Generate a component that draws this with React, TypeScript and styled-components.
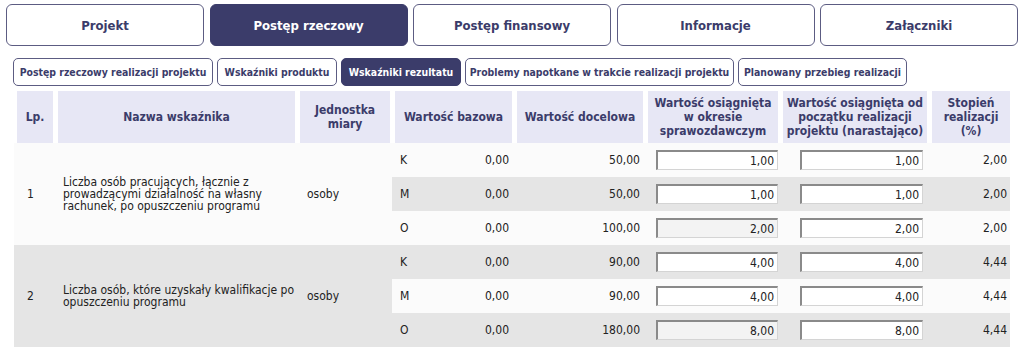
import React, { FC } from 'react';
import styled, { createGlobalStyle } from 'styled-components';

const GlobalStyle = createGlobalStyle`
  html, body {
    margin: 0;
    padding: 0;
    background: #ffffff;
  }

  body {
    font-family: Tahoma, "DejaVu Sans Condensed", "DejaVu Sans", sans-serif;
    color: #222222;
  }
`;

const NAVY = '#3b3c6a';

const Page = styled.div`
  box-sizing: border-box;
  width: 1023px;
  height: 354px;
  padding-top: 4px;
  overflow: hidden;
`;

const MainTabs = styled.nav`
  display: grid;
  grid-template-columns: repeat(5, 198px);
  column-gap: 5.5px;
  padding-left: 6px;
`;

const MainTab = styled.div<{ $active?: boolean }>`
  box-sizing: border-box;
  height: 42px;
  display: flex;
  align-items: center;
  justify-content: center;
  border: 1.5px solid ${({ $active }) => ($active ? NAVY : '#5c5c82')};
  border-radius: 6px;
  background: ${({ $active }) => ($active ? NAVY : '#ffffff')};
  color: ${({ $active }) => ($active ? '#ffffff' : NAVY)};
  font-size: 13px;
  font-weight: bold;
`;

const SubTabs = styled.nav`
  display: flex;
  gap: 4px;
  margin-top: 12px;
  padding-left: 13px;
`;

const SubTab = styled.div<{ $active?: boolean }>`
  box-sizing: border-box;
  height: 28px;
  display: flex;
  align-items: center;
  justify-content: center;
  border: 1.5px solid ${({ $active }) => ($active ? NAVY : '#5c5c82')};
  border-radius: 5px;
  background: ${({ $active }) => ($active ? NAVY : '#ffffff')};
  color: ${({ $active }) => ($active ? '#ffffff' : NAVY)};
  font-size: 10.4px;
  font-weight: bold;
  white-space: nowrap;
`;

const Table = styled.div`
  margin-top: 5px;
  margin-left: 14px;
  width: 996px;
`;

const HeaderRow = styled.div`
  display: grid;
  grid-template-columns: 36px 237px 90px 117px 126px 130px 144px 78px;
  column-gap: 5px;
  padding-left: 3px;
`;

const HeaderCell = styled.div`
  height: 52px;
  display: flex;
  align-items: center;
  justify-content: center;
  background: #e7e7f5;
  color: ${NAVY};
  font-size: 12px;
  font-weight: bold;
  line-height: 14px;
  text-align: center;
`;

const Group = styled.div<{ $shaded?: boolean }>`
  display: flex;
  background: ${({ $shaded }) => ($shaded ? '#e5e5e5' : '#fbfbfb')};
`;

const GroupInfo = styled.div`
  box-sizing: border-box;
  width: 378px;
  display: grid;
  grid-template-columns: 36px 237px 90px;
  column-gap: 5px;
  align-items: center;
  padding-left: 3px;
  font-size: 12px;
  line-height: 12px;
`;

const InfoCell = styled.div<{ $pad?: number }>`
  padding-left: ${({ $pad }) => $pad ?? 7}px;
`;

const Lines = styled.div`
  display: flex;
  flex-direction: column;
`;

const ValueRow = styled.div<{ $shaded?: boolean }>`
  box-sizing: border-box;
  height: 34px;
  display: grid;
  grid-template-columns: 117px 126px 130px 144px 78px;
  column-gap: 5px;
  align-items: center;
  padding-left: 3px;
  background: ${({ $shaded }) => ($shaded ? '#e5e5e5' : '#fbfbfb')};
  font-size: 12px;
`;

const BaseCell = styled.div`
  display: flex;
  justify-content: space-between;
  padding: 0 3px 0 5px;
`;

const NumCell = styled.div`
  text-align: right;
  padding-right: 3px;
`;

const InputCell = styled.div<{ $pad: number }>`
  display: flex;
  padding-left: ${({ $pad }) => $pad}px;
`;

const NumberInput = styled.div<{ $readonly?: boolean }>`
  box-sizing: border-box;
  width: 123px;
  height: 20px;
  display: flex;
  align-items: center;
  justify-content: flex-end;
  padding-right: 3px;
  border-style: solid;
  border-width: 2px 1px 1px 2px;
  border-color: #8a8a8a #d4d4d4 #d4d4d4 #8a8a8a;
  background: ${({ $readonly }) => ($readonly ? '#f3f3f3' : '#ffffff')};
  font-size: 12px;
`;

interface ValueLine {
  code: string;
  base: string;
  target: string;
  period: string;
  total: string;
  percent: string;
  readonly?: boolean;
}

interface Indicator {
  lp: string;
  name: string[];
  unit: string;
  lines: ValueLine[];
}

const mainTabs = ['Projekt', 'Postęp rzeczowy', 'Postęp finansowy', 'Informacje', 'Załączniki'];

const subTabs = [
  { label: 'Postęp rzeczowy realizacji projektu', width: 200 },
  { label: 'Wskaźniki produktu', width: 120 },
  { label: 'Wskaźniki rezultatu', width: 120 },
  { label: 'Problemy napotkane w trakcie realizacji projektu', width: 269 },
  { label: 'Planowany przebieg realizacji', width: 169 },
];

const headers = [
  ['Lp.'],
  ['Nazwa wskaźnika'],
  ['Jednostka', 'miary'],
  ['Wartość bazowa'],
  ['Wartość docelowa'],
  ['Wartość osiągnięta', 'w okresie', 'sprawozdawczym'],
  ['Wartość osiągnięta od', 'początku realizacji', 'projektu (narastająco)'],
  ['Stopień', 'realizacji', '(%)'],
];

const indicators: Indicator[] = [
  {
    lp: '1',
    name: ['Liczba osób pracujących, łącznie z', 'prowadzącymi działalność na własny', 'rachunek, po opuszczeniu programu'],
    unit: 'osoby',
    lines: [
      { code: 'K', base: '0,00', target: '50,00', period: '1,00', total: '1,00', percent: '2,00' },
      { code: 'M', base: '0,00', target: '50,00', period: '1,00', total: '1,00', percent: '2,00' },
      { code: 'O', base: '0,00', target: '100,00', period: '2,00', total: '2,00', percent: '2,00', readonly: true },
    ],
  },
  {
    lp: '2',
    name: ['Liczba osób, które uzyskały kwalifikacje po', 'opuszczeniu programu'],
    unit: 'osoby',
    lines: [
      { code: 'K', base: '0,00', target: '90,00', period: '4,00', total: '4,00', percent: '4,44' },
      { code: 'M', base: '0,00', target: '90,00', period: '4,00', total: '4,00', percent: '4,44' },
      { code: 'O', base: '0,00', target: '180,00', period: '8,00', total: '8,00', percent: '4,44', readonly: true },
    ],
  },
];

const App: FC = () => {
  return (
    <>
      <GlobalStyle />
      <Page>
        <MainTabs>
          {mainTabs.map((tab) => (
            <MainTab key={tab} $active={tab === 'Postęp rzeczowy'}>
              {tab}
            </MainTab>
          ))}
        </MainTabs>

        <SubTabs>
          {subTabs.map((tab) => (
            <SubTab key={tab.label} $active={tab.label === 'Wskaźniki rezultatu'} style={{ width: tab.width }}>
              {tab.label}
            </SubTab>
          ))}
        </SubTabs>

        <Table>
          <HeaderRow>
            {headers.map((lines) => (
              <HeaderCell key={lines.join(' ')}>
                <Lines>
                  {lines.map((line) => (
                    <span key={line}>{line}</span>
                  ))}
                </Lines>
              </HeaderCell>
            ))}
          </HeaderRow>

          {indicators.map((item, index) => {
            const shaded = index % 2 === 1;
            return (
              <Group key={item.lp} $shaded={shaded}>
                <GroupInfo>
                  <InfoCell $pad={10}>{item.lp}</InfoCell>
                  <InfoCell $pad={5}>
                    <Lines>
                      {item.name.map((line) => (
                        <span key={line}>{line}</span>
                      ))}
                    </Lines>
                  </InfoCell>
                  <InfoCell $pad={7}>{item.unit}</InfoCell>
                </GroupInfo>
                <Lines>
                  {item.lines.map((line, i) => (
                    <ValueRow key={line.code} $shaded={i === 1 ? !shaded : shaded}>
                      <BaseCell>
                        <span>{line.code}</span>
                        <span>{line.base}</span>
                      </BaseCell>
                      <NumCell>{line.target}</NumCell>
                      <InputCell $pad={8}>
                        <NumberInput $readonly={line.readonly}>{line.period}</NumberInput>
                      </InputCell>
                      <InputCell $pad={17}>
                        <NumberInput>{line.total}</NumberInput>
                      </InputCell>
                      <NumCell>{line.percent}</NumCell>
                    </ValueRow>
                  ))}
                </Lines>
              </Group>
            );
          })}
        </Table>
      </Page>
    </>
  );
};

export default App;
